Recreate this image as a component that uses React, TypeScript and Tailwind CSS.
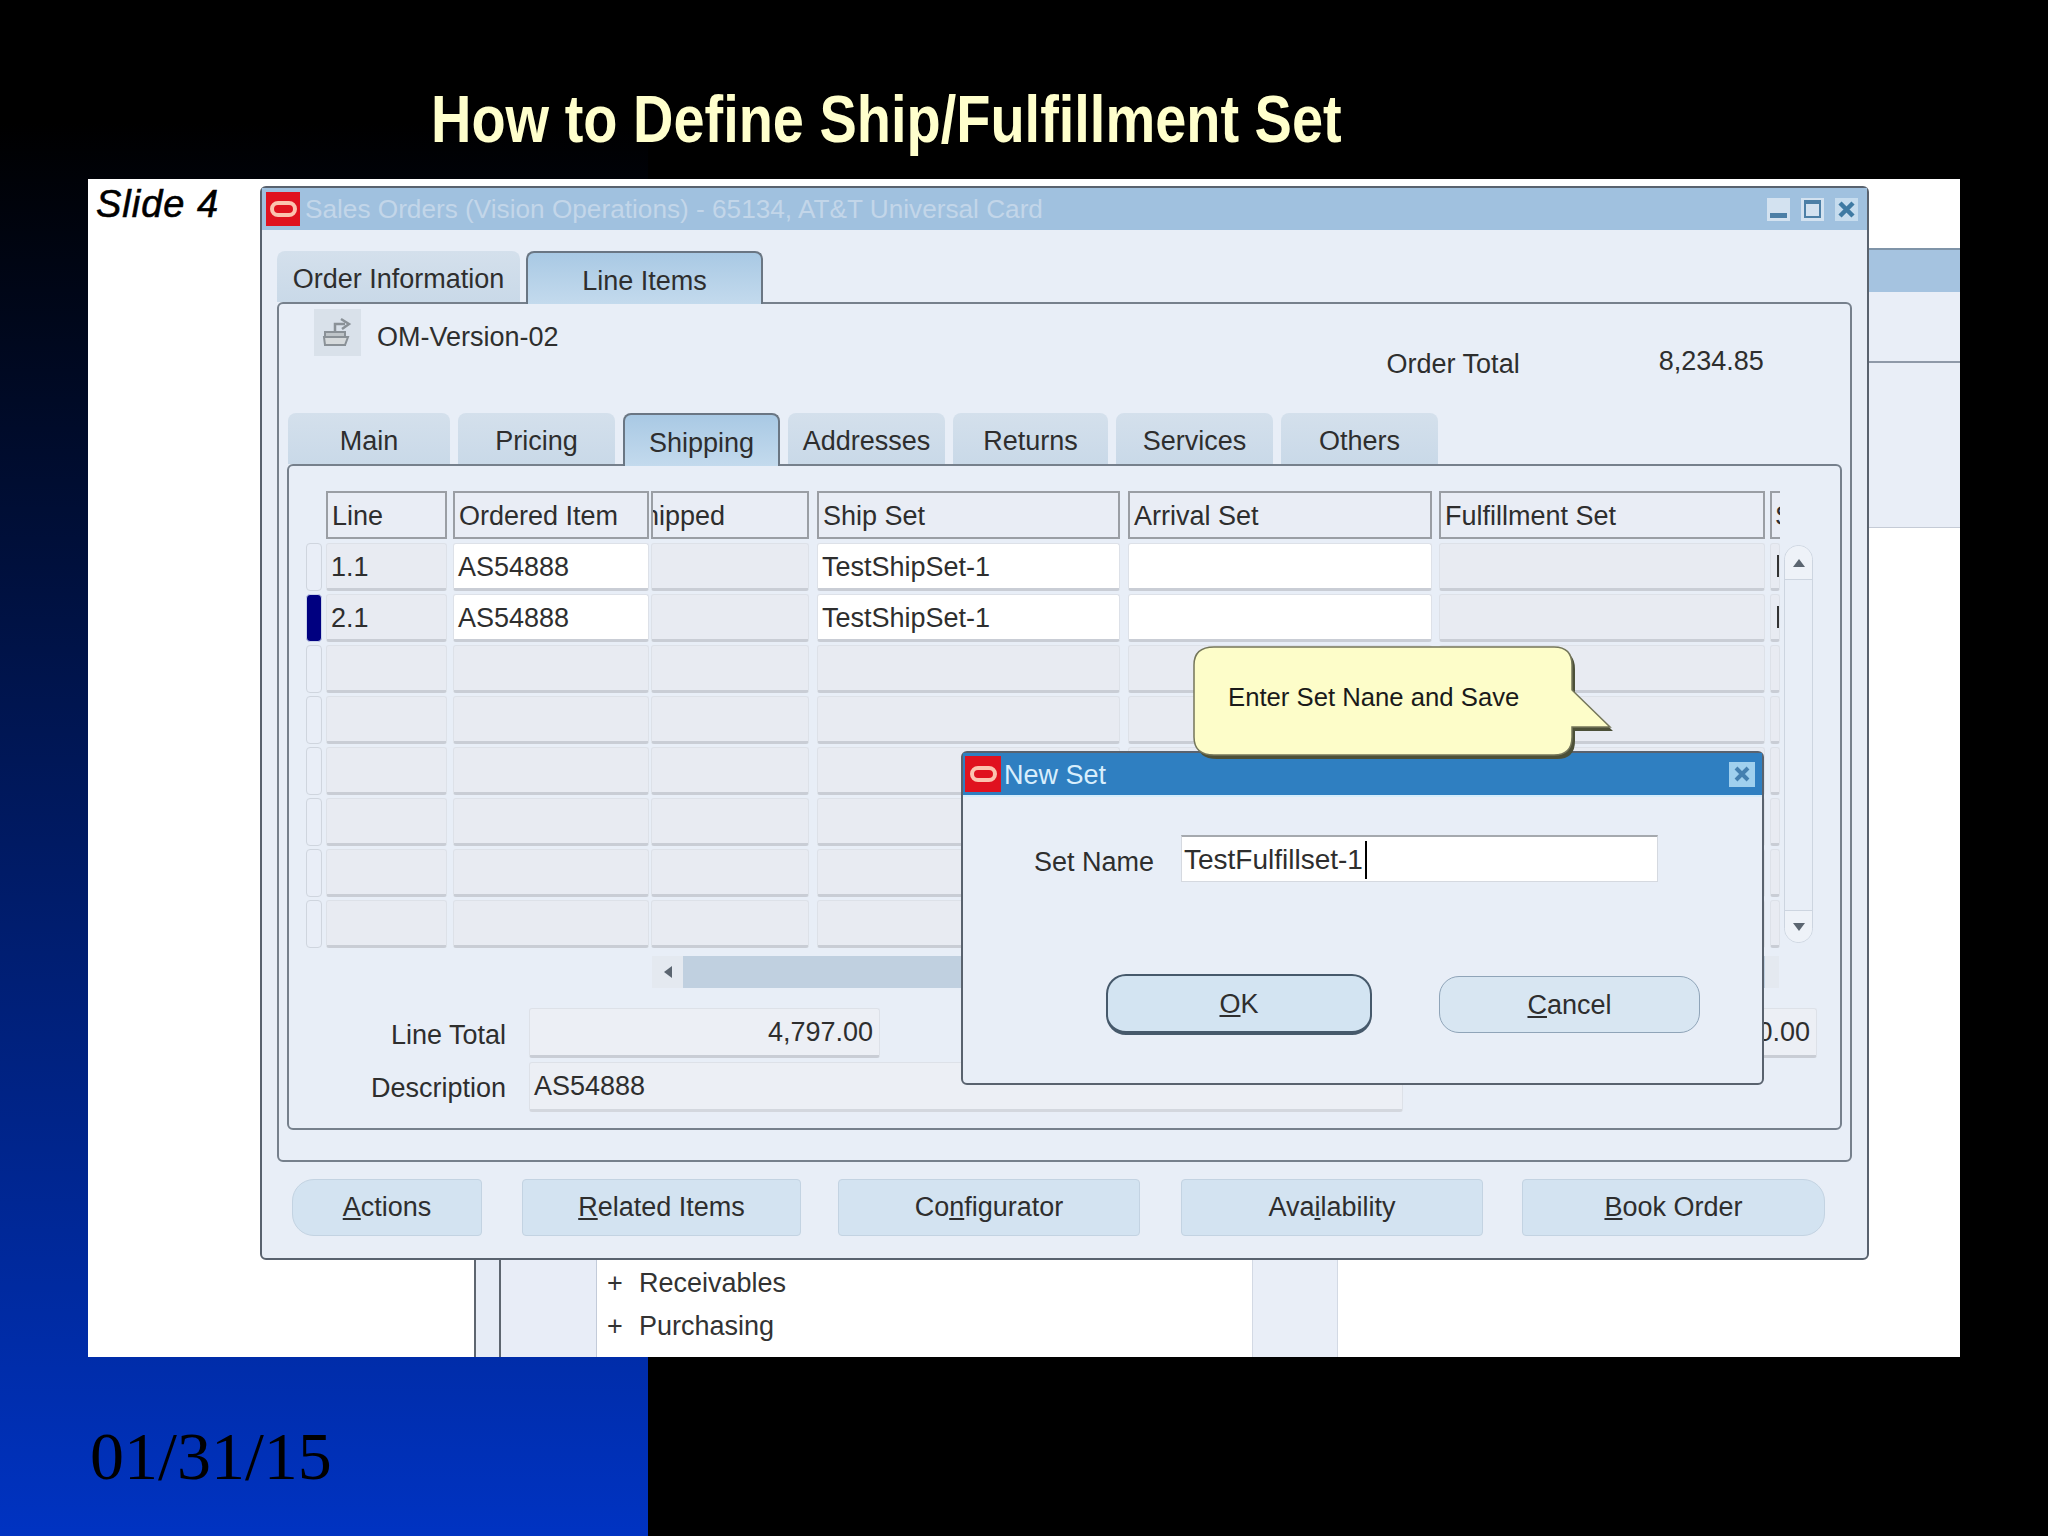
import React from 'react';

const sans = { fontFamily: '"Liberation Sans", Arial, sans-serif' };

// left edges and gaps of the grid columns, taken from the screenshot
const columns = [
  'w-[121px] mr-[6px]',
  'w-[196px] mr-[2px]',
  'w-[158px] mr-[8px]',
  'w-[303px] mr-[8px]',
  'w-[304px] mr-[7px]',
  'w-[326px] mr-[5px]',
  'w-[10px]',
];

const rows = [
  ['1.1', 'AS54888', '', 'TestShipSet-1', '', ''],
  ['2.1', 'AS54888', '', 'TestShipSet-1', '', ''],
  ['', '', '', '', '', ''],
  ['', '', '', '', '', ''],
  ['', '', '', '', '', ''],
  ['', '', '', '', '', ''],
  ['', '', '', '', '', ''],
  ['', '', '', '', '', ''],
];

function OracleLogo({ className }: { className: string }) {
  return (
    <div className={`flex items-center justify-center bg-[#e0121f] ${className}`}>
      <div className="w-[27px] h-[16px] rounded-[8px] border-[4px] border-[#fbc4b0]" />
    </div>
  );
}

function Tab({ label, active, className }: { label: string; active?: boolean; className: string }) {
  return (
    <div
      className={`flex items-center justify-center pt-[5px] rounded-t-[8px] ${
        active
          ? 'relative z-10 -mb-[2px] border-2 border-b-0 border-[#6a7683] bg-gradient-to-b from-[#a9c9e4] to-[#c3daed]'
          : 'bg-gradient-to-b from-[#d4e0ec] to-[#c9d9e8]'
      } ${className}`}
    >
      {label}
    </div>
  );
}

function HeaderCell({ label, className, inner }: { label: string; className: string; inner?: string }) {
  return (
    <div className={`h-[48px] pt-[2px] flex items-center overflow-hidden border-2 border-[#9a9ea4] bg-[#e9edf5] ${className}`}>
      <span className={`whitespace-nowrap ${inner ?? 'pl-[4px]'}`}>{label}</span>
    </div>
  );
}

function Cell({ value, white, className }: { value: string; white?: boolean; className: string }) {
  return (
    <div
      className={`h-[48px] pl-[4px] pt-[2px] flex items-center rounded-[3px] border border-[#dde1e8] border-b-[3px] border-b-[#c9cdd5] ${
        white ? 'bg-white' : 'bg-[#e8ebf2]'
      } ${className}`}
    >
      {value}
    </div>
  );
}

function BottomButton({ className, children }: { className: string; children: React.ReactNode }) {
  return (
    <div className={`h-[57px] flex items-center justify-center bg-[#d3e3f1] border border-[#c3d3e2] ${className}`}>
      {children}
    </div>
  );
}

export default function App() {
  return (
    <div
      className="w-[2048px] h-[1536px] flex flex-col overflow-hidden bg-black bg-[linear-gradient(to_bottom,#000000_8%,#0033c2_100%)] bg-[length:648px_100%] bg-no-repeat text-[27px] text-[#2e2e2e]"
      style={sans}
    >
      {/* title */}
      <div className="h-[179px] pl-[431px] pt-[79px] shrink-0">
        <div className="text-[67px] leading-[80px] font-bold text-[#ffffcc] whitespace-nowrap origin-left scale-x-[0.835]">
          How to Define Ship/Fulfillment Set
        </div>
      </div>

      {/* slide */}
      <div className="ml-[88px] w-[1872px] h-[1178px] shrink-0 bg-white flex items-start overflow-hidden">
        <div className="w-[172px] pl-[8px] pt-[3px] shrink-0 text-[38px] leading-[44px] italic text-black tracking-[1px] [-webkit-text-stroke:0.6px_#000]">
          Slide 4
        </div>

        <div className="w-[1609px] shrink-0 pt-[7px]">
          {/* Sales Orders window */}
          <div className="relative h-[1074px] flex flex-col border-2 border-[#59626e] rounded-[6px] bg-[#e8eef7]">
            <div className="h-[42px] shrink-0 flex items-center pl-[4px] pr-[9px] bg-[#a0c1df]">
              <OracleLogo className="w-[34px] h-[34px] shrink-0" />
              <span className="ml-[5px] pt-[1px] text-[26.2px] text-[#c3d6e9] whitespace-nowrap">Sales Orders (Vision Operations) - 65134, AT&amp;T Universal Card</span>
              <div className="ml-auto flex gap-[11px]">
                <div className="w-[23px] h-[23px] bg-[#d3e2f0] flex items-end justify-center pb-[3px]">
                  <div className="w-[17px] h-[5px] bg-[#4c7fa6]" />
                </div>
                <div className="w-[23px] h-[23px] bg-[#d3e2f0] flex items-center justify-center">
                  <div className="w-[17px] h-[18px] border-2 border-t-[4px] border-[#4c7fa6]" />
                </div>
                <div className="w-[23px] h-[23px] bg-[#c6dcee] flex items-center justify-center">
                  <svg width="19" height="19" viewBox="0 0 19 19">
                    <path d="M3 3 L16 16 M16 3 L3 16" stroke="#3f7aa3" strokeWidth="4.5" />
                  </svg>
                </div>
              </div>
            </div>

            {/* order / line items tabs */}
            <div className="ml-[15px] mt-[21px] h-[51px] shrink-0 flex gap-[6px]">
              <Tab label="Order Information" className="w-[243px]" />
              <Tab label="Line Items" active className="w-[237px]" />
            </div>

            <div className="mx-[15px] h-[860px] shrink-0 border-2 border-[#76808c] rounded-[6px] flex flex-col">
              <div className="h-[109px] shrink-0 flex pl-[35px] pt-[5px]">
                <div className="w-[47px] h-[47px] bg-[#d9e1ea] flex items-center justify-center">
                  <svg width="34" height="36" viewBox="0 0 34 36">
                    <path d="M4 17 H24 V30 H4 Z" fill="#bfc5c9" stroke="#8a9197" strokeWidth="2" />
                    <path d="M3 22 H27 L24 30 H4 Z" fill="#d6dadc" stroke="#8a9197" strokeWidth="2" />
                    <path d="M14 16 V9 H24 M20 4 L28 9 L21 14" fill="none" stroke="#8a9197" strokeWidth="2.5" />
                  </svg>
                </div>
                <span className="ml-[16px] mt-[12px] leading-[32px]">OM-Version-02</span>
                <span className="ml-[828px] mt-[39px] leading-[32px]">Order Total</span>
                <span className="ml-[139px] mt-[36px] leading-[32px]">8,234.85</span>
              </div>

              {/* sub tabs */}
              <div className="ml-[9px] h-[51px] shrink-0 flex gap-[8px]">
                <Tab label="Main" className="w-[162px]" />
                <Tab label="Pricing" className="w-[157px]" />
                <Tab label="Shipping" active className="w-[157px]" />
                <Tab label="Addresses" className="w-[157px]" />
                <Tab label="Returns" className="w-[155px]" />
                <Tab label="Services" className="w-[157px]" />
                <Tab label="Others" className="w-[157px]" />
              </div>

              <div className="mx-[8px] h-[666px] shrink-0 border-2 border-[#76808c] rounded-[6px] pt-[25px] pl-[17px]">
                <div className="flex items-start">
                  <div>
                    <div className="flex pl-[20px] mb-[4px]">
                      <HeaderCell label="Line" className={columns[0]} />
                      <HeaderCell label="Ordered Item" className={columns[1]} />
                      <HeaderCell label="Shipped" className={columns[2]} inner="-ml-[27px]" />
                      <HeaderCell label="Ship Set" className={columns[3]} />
                      <HeaderCell label="Arrival Set" className={columns[4]} />
                      <HeaderCell label="Fulfillment Set" className={columns[5]} />
                      <HeaderCell label="S" className={`${columns[6]} border-r-0`} inner="pl-[3px]" />
                    </div>
                    {rows.map((row, i) => (
                      <div key={i} className="flex mb-[3px]">
                        <div
                          className={`w-[16px] h-[48px] mr-[4px] rounded-[4px] border ${
                            i === 1 ? 'bg-[#000080] border-[#c9d2ea]' : 'bg-[#e9eef7] border-[#cfd5de]'
                          }`}
                        />
                        <Cell value={row[0]} className={columns[0]} />
                        <Cell value={row[1]} white={i < 2} className={columns[1]} />
                        <Cell value={row[2]} className={columns[2]} />
                        <Cell value={row[3]} white={i < 2} className={columns[3]} />
                        <Cell value={row[4]} white={i < 2} className={columns[4]} />
                        <Cell value={row[5]} className={columns[5]} />
                        <div className={`h-[48px] flex items-center rounded-[3px] border border-[#dde1e8] border-b-[3px] border-b-[#c9cdd5] bg-[#e8ebf2] ${columns[6]}`}>
                          {i < 2 && <div className="ml-[6px] w-[3px] h-[22px] bg-[#333]" />}
                        </div>
                      </div>
                    ))}
                  </div>

                  {/* vertical scrollbar */}
                  <div className="ml-[4px] mt-[54px] w-[29px] h-[398px] flex flex-col justify-between rounded-full border border-[#cdd5e0]">
                    <div className="h-[34px] flex items-center justify-center rounded-t-full border-b border-[#cdd5e0] bg-[#eef2f8]">
                      <svg width="14" height="10" viewBox="0 0 14 10"><path d="M7 1 L13 9 H1 Z" fill="#5b6570" /></svg>
                    </div>
                    <div className="h-[32px] flex items-center justify-center rounded-b-full border-t border-[#cdd5e0] bg-[#eef2f8]">
                      <svg width="14" height="10" viewBox="0 0 14 10"><path d="M1 1 H13 L7 9 Z" fill="#5b6570" /></svg>
                    </div>
                  </div>
                </div>

                {/* horizontal scrollbar */}
                <div className="ml-[346px] mt-[5px] w-[1127px] h-[32px] flex bg-[#c0d0e0]">
                  <div className="w-[31px] flex items-center justify-center bg-[#e4e9f0]">
                    <svg width="10" height="14" viewBox="0 0 10 14"><path d="M9 1 V13 L1 7 Z" fill="#5b6570" /></svg>
                  </div>
                  <div className="ml-auto w-[14px] bg-[#e4e9f0]" />
                </div>

                {/* totals */}
                <div className="mt-[20px] flex">
                  <div className="w-[200px] text-right leading-[54px]">Line Total</div>
                  <div className="ml-[23px] w-[351px] h-[50px] pr-[6px] pt-[1px] flex items-center justify-end rounded-[3px] border border-[#dde1e8] border-b-[3px] border-b-[#c9cdd5] bg-[#eceff5]">4,797.00</div>
                  <div className="ml-[622px] w-[315px] h-[50px] pr-[6px] pt-[1px] flex items-center justify-end rounded-[3px] border border-[#dde1e8] border-b-[3px] border-b-[#c9cdd5] bg-[#eceff5]">0.00</div>
                </div>
                <div className="flex">
                  <div className="w-[200px] text-right leading-[52px]">Description</div>
                  <div className="ml-[23px] w-[874px] h-[50px] pl-[4px] flex items-center rounded-[3px] border border-[#dde1e8] border-b-[3px] border-b-[#d3d7de] bg-[#eceff5]">AS54888</div>
                </div>
              </div>
            </div>

            {/* bottom buttons */}
            <div className="mt-[17px] pl-[30px] flex">
              <BottomButton className="w-[190px] rounded-l-[22px] rounded-r-[4px]"><span><u>A</u>ctions</span></BottomButton>
              <BottomButton className="ml-[40px] w-[279px] rounded-[4px]"><span><u>R</u>elated Items</span></BottomButton>
              <BottomButton className="ml-[37px] w-[302px] rounded-[4px]"><span>Co<u>n</u>figurator</span></BottomButton>
              <BottomButton className="ml-[41px] w-[302px] rounded-[4px]"><span>Ava<u>i</u>lability</span></BottomButton>
              <BottomButton className="ml-[39px] w-[303px] rounded-l-[4px] rounded-r-[22px]"><span><u>B</u>ook Order</span></BottomButton>
            </div>

            {/* New Set dialog */}
            <div className="absolute z-20 left-[699px] top-[563px] w-[803px] h-[334px] flex flex-col border-2 border-[#59626e] rounded-[6px] bg-[#e8eef7]">
              <div className="h-[44px] shrink-0 flex items-center pl-[2px] pr-[7px] bg-[#2f7fc1] border-b-[2px] border-[#d4ecfb] text-[#d8eefc]">
                <OracleLogo className="w-[36px] h-[36px] shrink-0" />
                <span className="ml-[3px] pt-[2px]">New Set</span>
                <div className="ml-auto w-[26px] h-[25px] bg-[#9fd0ee] flex items-center justify-center">
                  <svg width="18" height="18" viewBox="0 0 18 18">
                    <path d="M3 3 L15 15 M15 3 L3 15" stroke="#4480b0" strokeWidth="4" />
                  </svg>
                </div>
              </div>
              <div className="mt-[37px] ml-[71px] flex items-center">
                <span className="w-[122px] mt-[8px] whitespace-nowrap">Set Name</span>
                <div className="ml-[25px] w-[477px] h-[47px] pl-[2px] pt-[2px] flex items-center bg-white border border-[#d5d9e0] border-t-2 border-t-[#a5a9ae] text-[28px] leading-none">
                  TestFulfillset-1
                  <div className="w-[2px] h-[38px] ml-[2px] bg-black" />
                </div>
              </div>
              <div className="mt-[91px] ml-[143px] flex items-center">
                <div className="w-[266px] h-[61px] pt-[3px] flex items-center justify-center rounded-[20px] border-2 border-b-[4px] border-[#46596b] bg-[#d3e4f2]"><span><u>O</u>K</span></div>
                <div className="ml-[67px] w-[261px] h-[57px] pt-[3px] flex items-center justify-center rounded-[20px] border border-[#8fa4b8] bg-[#d8e6f2]"><span><u>C</u>ancel</span></div>
              </div>
            </div>

            {/* callout */}
            <div className="absolute z-30 left-[930px] top-[457px] w-[424px] h-[118px]">
              <svg width="424" height="118" viewBox="0 0 424 118" className="absolute left-0 top-0">
                <path
                  d="M22 2 H362 Q380 2 380 20 V45 L418 82 H380 V92 Q380 110 362 110 H22 Q2 110 2 92 V20 Q2 2 22 2 Z"
                  fill="#4c5038"
                  transform="translate(3 4)"
                />
                <path
                  d="M22 2 H362 Q380 2 380 20 V45 L418 82 H380 V92 Q380 110 362 110 H22 Q2 110 2 92 V20 Q2 2 22 2 Z"
                  fill="#fdfdc9"
                  stroke="#74765a"
                  strokeWidth="1.5"
                />
              </svg>
              <div className="absolute left-[36px] top-[36px] text-[25.7px] leading-[32px] text-[#1a1a1a] whitespace-nowrap">Enter Set Nane and Save</div>
            </div>
          </div>

          {/* what shows below the window */}
          <div className="flex h-[97px]">
            <div className="w-[214px] shrink-0" />
            <div className="w-[27px] shrink-0 border-x-2 border-[#5e6670] bg-[#e6ecf6]" />
            <div className="w-[96px] shrink-0 border-r border-[#c3cbd9] bg-[#e8edf7]" />
            <div className="w-[655px] shrink-0 pl-[10px] pt-[2px] leading-[43px] text-[#333]">
              <div><span className="inline-block w-[32px]">+</span>Receivables</div>
              <div><span className="inline-block w-[32px]">+</span>Purchasing</div>
            </div>
            <div className="w-[86px] shrink-0 border-x border-[#d3d9e4] bg-[#e9eef7]" />
          </div>
        </div>

        {/* other window behind, right side */}
        <div className="w-[91px] shrink-0 mt-[69px]">
          <div className="h-[44px] bg-[#a5c3e0] border-t-2 border-[#7f94a8]" />
          <div className="h-[71px] bg-[#e9eef7] border-b-2 border-[#8f99a8]" />
          <div className="h-[165px] bg-[#e9eef7] border-b border-[#c5cbd6]" />
        </div>
      </div>

      {/* footer date */}
      <div className="pl-[90px] pt-[59px] text-[68px] leading-[80px] text-black" style={{ fontFamily: '"Liberation Serif", "Times New Roman", serif' }}>
        01/31/15
      </div>
    </div>
  );
}
